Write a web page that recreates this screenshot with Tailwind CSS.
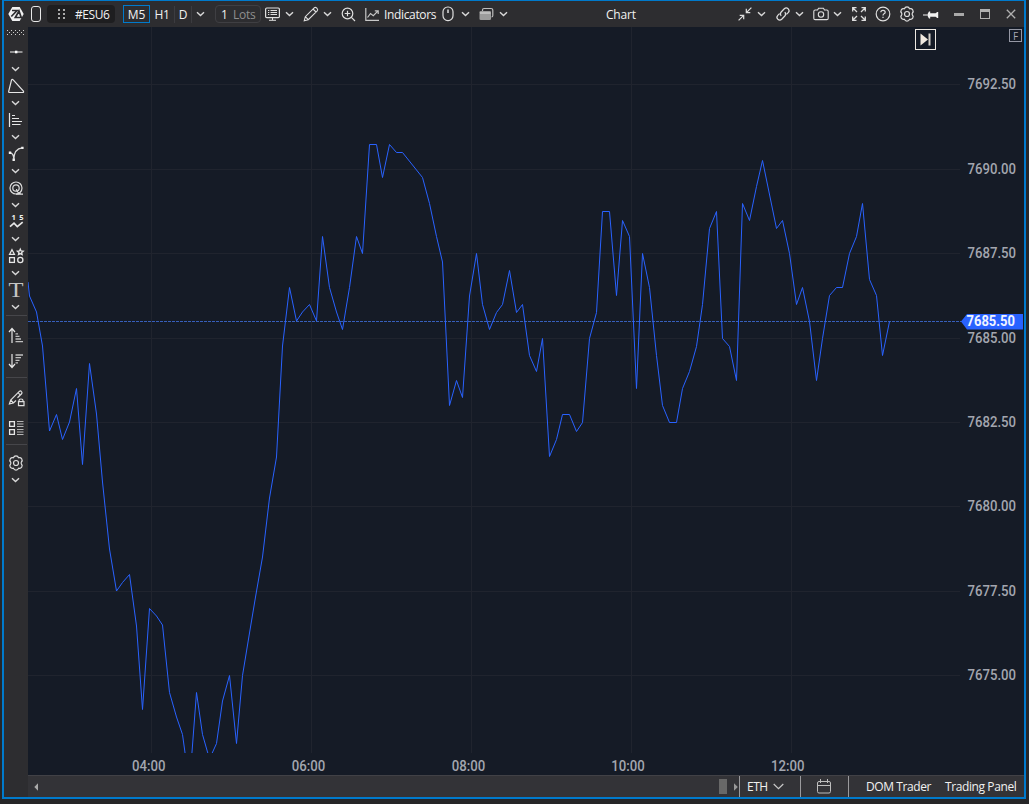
<!DOCTYPE html>
<html lang="en">
<head>
    <meta charset="UTF-8">
    <meta name="viewport" content="width=device-width, initial-scale=1.0">
    <title>Chart</title>
    <script src="https://cdn.jsdelivr.net/npm/@tailwindcss/browser@4"></script>
</head>
<body class="bg-[#262627] overflow-hidden">
    <!-- Shared icon shapes -->
    <svg class="hidden">
        <symbol id="chev" viewBox="0 0 10 6"><path d="M1 1.2 L4.5 4.6 L8 1.2" fill="none" stroke="#d8d8d8" stroke-width="1.4"/></symbol>
        <symbol id="gear" viewBox="0 0 16 16">
            <path d="M5.4 2.8 Q6 .8 8 .8 Q10 .8 10.6 2.8 Q12.6 2.2 13.7 3.8 Q14.8 5.6 13.4 7 Q12.8 8 13.4 9 Q14.8 10.4 13.7 12.2 Q12.6 13.8 10.6 13.2 Q10 15.2 8 15.2 Q6 15.2 5.4 13.2 Q3.4 13.8 2.3 12.2 Q1.2 10.4 2.6 9 Q3.2 8 2.6 7 Q1.2 5.6 2.3 3.8 Q3.4 2.2 5.4 2.8Z" fill="none" stroke="#dedede" stroke-width="1.2"/>
            <circle cx="8" cy="8" r="2.5" fill="none" stroke="#dedede" stroke-width="1.2"/>
        </symbol>
    </svg>

    <div class="w-[1024px] h-[799px] ml-[2px] border-2 border-t-1 border-[#007acc] flex flex-col font-['Open_Sans','Noto_Sans',sans-serif] text-xs text-[#f1f1f1]">
        <!-- Title bar -->
        <header class="h-[26px] shrink-0 bg-[#2d2d30] flex items-center whitespace-nowrap">
            <svg class="ml-1 shrink-0" width="16" height="16" viewBox="0 0 16 16">
                <path d="M4.3 1 H11.7 L15.7 8 L11.7 15 H4.3 L.3 8Z" fill="#f1f1f1"/>
                <path d="M4 4.5 H9 L3.3 10.5 M7.3 11.5 L11 5 L13.2 11.5Z" fill="none" stroke="#2d2d30" stroke-width="1.7"/>
            </svg>
            <svg class="ml-[6px] shrink-0" width="12" height="18" viewBox="0 0 12 18"><rect x="1.5" y="1.5" width="9" height="15" rx="2.5" fill="none" stroke="#e8e8e8"/></svg>
            <div class="ml-[5px] w-[68px] h-[18px] shrink-0 rounded bg-[#1e1e20] flex items-center pl-[10px]">
                <svg class="shrink-0" width="8" height="12" viewBox="0 0 8 12" fill="#aaa">
                    <path d="M1 1h2v2H1zM6 1h2v2H6zM1 5h2v2H1zM6 5h2v2H6zM1 9h2v2H1zM6 9h2v2H6z"/>
                </svg>
                <span class="ml-[10px] pt-0.5 tracking-[-0.45px]">#ESU6</span>
            </div>
            <div class="ml-2 w-[27px] h-[18px] shrink-0 border border-[#007acc] flex items-center justify-center"><span class="pt-0.5">M5</span></div>
            <span class="w-[24px] shrink-0 pt-0.5 text-center tracking-[-0.3px]">H1</span>
            <div class="w-px h-[17px] bg-[#3c3c40]"></div>
            <span class="w-[16px] shrink-0 pt-0.5 text-center">D</span>
            <div class="w-px h-[17px] bg-[#3c3c40]"></div>
            <svg class="ml-[4px] shrink-0" width="10" height="6"><use href="#chev"/></svg>
            <div class="ml-[9px] w-[46px] h-[18px] shrink-0 rounded border border-[#3f3f43] flex items-center pl-[5px] pt-0.5">
                <span>1</span><span class="ml-[5px] text-[#8f8f8f] tracking-[-0.2px]">Lots</span>
            </div>
            <svg class="ml-1 shrink-0" width="15" height="16" viewBox="0 0 15 16" fill="none" stroke="#dedede">
                <rect x=".6" y="2" width="13.8" height="9.6" rx="1.2" stroke-width="1.2"/>
                <path d="M3 4.5h1.3M5.5 4.5H12M3 6.5h1.3M5.5 6.5H12M3 8.5h1.3M5.5 8.5H12M7.5 11.5v2.5M4 14.3h7"/>
            </svg>
            <svg class="ml-[5px] shrink-0" width="10" height="6"><use href="#chev"/></svg>
            <svg class="ml-2 shrink-0" width="16" height="16" viewBox="0 0 16 16" fill="none" stroke="#dedede" stroke-width="1.1">
                <path d="M1.2 14.8 L2.3 10.7 L11.2 1.8 Q12.3.8 13.5 1.9 L14.1 2.5 Q15.2 3.7 14.2 4.8 L5.3 13.7Z M2.3 10.7 L5.3 13.7 M10 3 L13 6"/>
            </svg>
            <svg class="ml-1 shrink-0" width="10" height="6"><use href="#chev"/></svg>
            <svg class="ml-2 shrink-0" width="15" height="15" viewBox="0 0 15 15" fill="none" stroke="#dedede" stroke-width="1.2">
                <circle cx="6.5" cy="6.5" r="5.3"/><path d="M10.4 10.4 L14 14M3.7 6.5h5.6M6.5 3.7v5.6"/>
            </svg>
            <svg class="ml-[9px] shrink-0" width="15" height="15" viewBox="0 0 15 15" fill="none" stroke="#c8c8c8" stroke-width="1.2">
                <path d="M.8 1V13.3H14M2.5 10.5 L5.5 6.5 L8.3 8.7 L12.8 4.2M9.8 3.8H13.2V7"/>
            </svg>
            <span class="ml-1 w-[53px] shrink-0 pt-0.5 tracking-[-0.35px]">Indicators</span>
            <svg class="ml-[5px] shrink-0" width="12" height="16" viewBox="0 0 12 16" fill="none" stroke="#dedede" stroke-width="1.2">
                <rect x="1" y="1" width="10" height="13.6" rx="4.8"/><path d="M6 3.5v3.5" stroke-width="1.5"/>
            </svg>
            <svg class="ml-[7px] shrink-0" width="10" height="6"><use href="#chev"/></svg>
            <svg class="ml-2 shrink-0" width="15" height="14" viewBox="0 0 15 14">
                <path d="M3.5 4 V3 Q3.5 1.5 5 1.5 H12 Q13.8 1.5 13.8 3 V8.5 Q13.8 10 12.5 10" fill="none" stroke="#bdbdbd" stroke-width="1.2"/>
                <rect x=".5" y="4" width="11.5" height="9" rx="1.3" fill="#9c9c9c"/><path d="M1 6h10.5" stroke="#e0e0e0"/>
            </svg>
            <svg class="ml-[5px] shrink-0" width="10" height="6"><use href="#chev"/></svg>
            <span class="ml-[97px] w-[31px] shrink-0 pt-0.5 tracking-[-0.2px]">Chart</span>
            <svg class="ml-[101px] shrink-0" width="14" height="14" viewBox="0 0 14 14" fill="none" stroke="#dedede" stroke-width="1.2">
                <path d="M.6 13.4 L5.4 8.6M1.7 8.3H5.7V12.3M13.4.6 L8.6 5.4M8.3 1.7V5.7H12.3"/>
            </svg>
            <svg class="ml-[5px] shrink-0" width="10" height="6"><use href="#chev"/></svg>
            <svg class="ml-2 shrink-0" width="16" height="16" viewBox="0 0 16 16" fill="none" stroke="#dedede" stroke-width="1.2">
                <path d="M6.2 9.8 Q4.5 8 6.2 6 L9.3 2.8 Q11.2 1 13.2 2.8 Q15.1 4.8 13.2 6.7 L11.5 8.4M9.8 6.2 Q11.5 8 9.8 10 L6.7 13.2 Q4.8 15 2.8 13.2 Q.9 11.2 2.8 9.3 L4.5 7.6"/>
            </svg>
            <svg class="ml-[4px] shrink-0" width="10" height="6"><use href="#chev"/></svg>
            <svg class="ml-2 shrink-0" width="16" height="14" viewBox="0 0 16 14" fill="none" stroke="#dedede" stroke-width="1.1">
                <path d="M2.2 3 H4.5 L5.6 1.2 H10.4 L11.5 3 H13.8 Q15.2 3 15.2 4.4 V11.2 Q15.2 12.6 13.8 12.6 H2.2 Q.8 12.6 .8 11.2 V4.4 Q.8 3 2.2 3Z"/><circle cx="8" cy="7.5" r="2.7"/>
            </svg>
            <svg class="ml-[4px] shrink-0" width="10" height="6"><use href="#chev"/></svg>
            <svg class="ml-[9px] shrink-0" width="14" height="14" viewBox="0 0 14 14" fill="none" stroke="#dedede" stroke-width="1.3">
                <path d="M.7 4.5V.7H4.5M.7.7 L5 5M9.5.7H13.3V4.5M13.3.7 L9 5M.7 9.5V13.3H4.5M.7 13.3 L5 9M9.5 13.3H13.3V9.5M13.3 13.3 L9 9"/>
            </svg>
            <svg class="ml-[9px] shrink-0" width="16" height="16" viewBox="0 0 16 16" fill="none" stroke="#dedede" stroke-width="1.2">
                <circle cx="8" cy="8" r="6.8"/><path d="M5.8 6.3 Q5.9 4.3 8 4.3 Q10.2 4.3 10.2 6.2 Q10.2 7.2 9 7.8 Q8 8.3 8 9.5M8 10.7v1.3"/>
            </svg>
            <svg class="ml-2 shrink-0" width="16" height="16"><use href="#gear"/></svg>
            <svg class="ml-2 mt-px shrink-0" width="16" height="10" viewBox="0 0 16 10" fill="#f1f1f1">
                <path d="M0 4.5H6V5.5H0zM6 1.5H7.2V3.2H12.6L14.2 2H15.2V8H14.2L12.6 6.8H7.2V8.5H6L4.8 6.5V3.5Z"/>
            </svg>
            <div class="ml-[15px] w-[10px] h-[3px] mt-px shrink-0 bg-[#a9a9a9]"></div>
            <div class="ml-4 w-[10px] h-[10px] shrink-0 border border-t-3 border-[#b0b0b0]"></div>
            <svg class="ml-4 shrink-0" width="10" height="10" viewBox="0 0 10 10"><path d="M.8.8 L9.2 9.2M9.2.8 L.8 9.2" stroke="#b0b0b0" stroke-width="1.3"/></svg>
        </header>

        <div class="flex grow min-h-0">
            <!-- Drawing tools -->
            <aside class="w-[24px] shrink-0 bg-[#2d2d30] flex flex-col items-center">
                <svg class="shrink-0" width="24" height="14" viewBox="0 0 24 14">
                    <path d="M3 3.5H20M3 7.5H20" stroke="#d0d0d0" stroke-dasharray="1 3"/><path d="M5 5.5H20" stroke="#d0d0d0" stroke-dasharray="1 3"/>
                </svg>
                <svg class="shrink-0" width="24" height="22" viewBox="0 0 24 22"><path d="M6 11H18.5" stroke="#b5b5b5" stroke-width="1.5"/><rect x="11" y="9.7" width="2.4" height="2.6" fill="#fff"/></svg>
                <svg class="my-[3px] shrink-0" width="10" height="6"><use href="#chev"/></svg>
                <svg class="shrink-0" width="24" height="22" viewBox="0 0 24 22"><path d="M7.5 5 Q8.2 3.9 9.2 4.9 L19.4 16 Q20 17.5 18.7 17.5 H5.5 Q4.5 17.5 4.7 16.3Z" fill="none" stroke="#e6e6e6" stroke-width="1.2"/></svg>
                <svg class="my-[3px] shrink-0" width="10" height="6"><use href="#chev"/></svg>
                <svg class="shrink-0" width="24" height="22" viewBox="0 0 24 22"><path d="M5.5 4V18M8 6.5h3M8 9.5h7M8 12.5h10M8 15.5h8.5" stroke="#e6e6e6" stroke-width="1.2"/></svg>
                <svg class="my-[3px] shrink-0" width="10" height="6"><use href="#chev"/></svg>
                <svg class="shrink-0" width="24" height="22" viewBox="0 0 24 22">
                    <path d="M18.3 4.9 Q10 5.5 9.7 17M6 9.7 Q9.4 10.5 9.7 15" fill="none" stroke="#dedede" stroke-width="1.3"/>
                    <path d="M17.2 3.7h2.4v2.4h-2.4zM4.8 8.5h2.4v2.4h-2.4zM8.5 15.6h2.4v2.4h-2.4z" fill="#f1f1f1"/>
                </svg>
                <svg class="my-[3px] shrink-0" width="10" height="6"><use href="#chev"/></svg>
                <svg class="shrink-0" width="24" height="22" viewBox="0 0 24 22" fill="none" stroke="#dedede" stroke-width="1.2">
                    <circle cx="12" cy="11" r="6"/><circle cx="12" cy="11" r="3.2"/><path d="M12 17.2H19M12.5 12 Q13 16 17 17"/>
                </svg>
                <svg class="my-[3px] shrink-0" width="10" height="6"><use href="#chev"/></svg>
                <svg class="shrink-0" width="24" height="22" viewBox="0 0 24 22">
                    <path d="M6 15.7 L10 12.2 L13.3 15.7 L18.7 11.2" fill="none" stroke="#e6e6e6" stroke-width="1.7"/>
                    <text x="7.5" y="9" font-size="7.5" font-weight="700" fill="#f1f1f1">1</text><text x="15.3" y="9" font-size="7.5" font-weight="700" fill="#f1f1f1">5</text>
                </svg>
                <svg class="my-[3px] shrink-0" width="10" height="6"><use href="#chev"/></svg>
                <svg class="shrink-0" width="24" height="22" viewBox="0 0 24 22" fill="none" stroke="#e6e6e6" stroke-width="1.3">
                    <path d="M8 4.7 L10.4 9.3 H5.6ZM16.3 4.2 L17.1 6 L19.2 6.2 L17.7 7.6 L18.1 9.6 L16.3 8.6 L14.5 9.6 L14.9 7.6 L13.4 6.2 L15.5 6Z"/><rect x="5.6" y="12.6" width="4.8" height="4.8"/><circle cx="16.3" cy="15" r="2.6"/>
                </svg>
                <svg class="my-[3px] shrink-0" width="10" height="6"><use href="#chev"/></svg>
                <svg class="shrink-0" width="24" height="22" viewBox="0 0 24 22"><text x="4.6" y="18" font-size="21" fill="#c4c4c4" textLength="15" lengthAdjust="spacingAndGlyphs" class="font-['Liberation_Serif',serif]">T</text></svg>
                <svg class="my-[3px] shrink-0" width="10" height="6"><use href="#chev"/></svg>
                <div class="mt-[2px] w-[21px] h-px shrink-0 bg-[#46464a]"></div>
                <svg class="mt-[10px] shrink-0" width="24" height="18" viewBox="0 0 24 18">
                    <path d="M8 17V2.5M5 6 L8 2.5 L11 6" fill="none" stroke="#e6e6e6" stroke-width="1.2"/><path d="M11.5 7.8h2.5M11.5 10.4h4M11.5 13h5.5M11.5 15.6h7.5" stroke="#c0c0c0" stroke-width="1.3"/>
                </svg>
                <svg class="mt-2 shrink-0" width="24" height="18" viewBox="0 0 24 18">
                    <path d="M8 2V15.5M5 12 L8 15.5 L11 12" fill="none" stroke="#e6e6e6" stroke-width="1.2"/><path d="M11.5 3h7.5M11.5 5.7h5.5M11.5 8.3h4M11.5 10.9h2.5" stroke="#c0c0c0" stroke-width="1.3"/>
                </svg>
                <div class="mt-[7px] w-[21px] h-px shrink-0 bg-[#46464a]"></div>
                <svg class="mt-[11px] shrink-0" width="24" height="18" viewBox="0 0 24 18" fill="none" stroke="#dedede" stroke-width="1.2">
                    <path d="M13.5 8.8 L17.6 4.8 Q18.5 3.6 17.5 2.6 Q16.5 1.5 15.3 2.4 L6.7 11 L5.4 15 L9.4 14 L12 11.5M14 3.7 L16.4 6.1M6.7 11 L9.4 14"/><path d="M15 12.5V11.5Q15 10 17 10T19 11.5V12.5M14.5 12.6H20V16.6H14.5Z"/>
                </svg>
                <svg class="mt-[12px] shrink-0" width="24" height="18" viewBox="0 0 24 18">
                    <path d="M5.6 2.6h4.8v4.8H5.6zM5.6 10.6h4.8v4.8H5.6z" fill="none" stroke="#e6e6e6" stroke-width="1.3"/><path d="M13 2.5h6.5M13 5h6.5M13 7.5h6.5M13 10.5h6.5M13 13h6.5M13 15.5h6.5" stroke="#b5b5b5" stroke-width="1.1"/>
                </svg>
                <div class="mt-[7px] w-[21px] h-px shrink-0 bg-[#46464a]"></div>
                <svg class="mt-[10px] shrink-0" width="16" height="16"><use href="#gear"/></svg>
                <svg class="mt-[6px] shrink-0" width="10" height="6"><use href="#chev"/></svg>
            </aside>

            <main class="grow min-w-0 flex flex-col">
                <!-- Price chart -->
                <div class="relative h-[748px] shrink-0 bg-[#151b26]">
                    <svg width="996" height="748" viewBox="28 27 996 748" class="block font-['Roboto',sans-serif]">
                        <defs><clipPath id="plot"><rect x="28" y="27" width="932" height="726"/></clipPath></defs>
                        <path d="M151 27V753M311 27V753M471 27V753M631 27V753M791 27V753" transform="translate(.5 0)" stroke="#20242e"/>
                        <path d="M28 84H960M28 169H960M28 253H960M28 338H960M28 422H960M28 506H960M28 591H960M28 675H960" transform="translate(0 .5)" stroke="#20242e"/>
                        <path d="M28 321.5H962" stroke="#4070e0" stroke-dasharray="3 1" stroke-opacity=".8"/>
                        <polyline clip-path="url(#plot)" fill="none" stroke="#2962ff" points="
                            28,282 29.5,296 36.5,312 42.5,346 49.5,431 56.5,414.5 62.5,439.5 69.5,422 76.5,388.5 82.5,464.5 89.5,363.5 96.5,414
                            102.5,482 109.5,549 116.5,591 122.5,582.5 129.5,574.5 136.5,626 142.5,709.5 149.5,608.5 156.5,616 162.5,625 169.5,692.5
                            176.5,717 182.5,734.5 189.5,785 196.5,692.5 202.5,734.5 209.5,759 216.5,743.5 222.5,701 229.5,675.5 236.5,743.5 242.5,675.5
                            249.5,633 255.5,597 262.5,557 269.5,498 276.5,457 282.5,346 289.5,287.5 296.5,321 302.5,312 309.5,304.5 316.5,321
                            322.5,236.5 329.5,287.5 336.5,312 342.5,329.5 349.5,287.5 356.5,236.5 362.5,253.5 369.5,144.5 376.5,144.5 382.5,177.5
                            389.5,144.5 396.5,152.5 402.5,152.5 422.5,177.5 429.5,203.5 436.5,236.5 442.5,262 449.5,405.5 456.5,380.5 462.5,397.5
                            469.5,296 476.5,253.5 482.5,304.5 489.5,329.5 496.5,312.5 502.5,304.5 509.5,270.5 516.5,312.5 522.5,304.5 529.5,355.5
                            536.5,371.5 542.5,338.5 549.5,456.5 556.5,439.5 562.5,414.5 569.5,414.5 576.5,431.5 582.5,422.5 589.5,338.5 596.5,312.5
                            602.5,211.5 609.5,211.5 616.5,295.5 622.5,220.5 629.5,236.5 636.5,388.5 642.5,253.5 649.5,287.5 656.5,355.5 662.5,405.5
                            669.5,422.5 676.5,422.5 682.5,388.5 689.5,371.5 696.5,346.5 702.5,304.5 709.5,228.5 716.5,211.5 722.5,338.5 729.5,346.5
                            736.5,380.5 742.5,203.5 749.5,220.5 756.5,186.5 762.5,160.5 776.5,228.5 782.5,220.5 789.5,253.5 796.5,304.5 802.5,287.5
                            809.5,321.5 816.5,380.5 822.5,338.5 829.5,295.5 836.5,287.5 842.5,287.5 849.5,253.5 856.5,236.5 862.5,203.5 869.5,279.5
                            876.5,295.5 882.5,355.5 889.5,321.5"/>
                        <g fill="#a3a6af" font-size="14" font-weight="500">
                            <text x="967.5" y="89" textLength="48.5" lengthAdjust="spacingAndGlyphs">7692.50</text>
                            <text x="967.5" y="174" textLength="48.5" lengthAdjust="spacingAndGlyphs">7690.00</text>
                            <text x="967.5" y="258" textLength="48.5" lengthAdjust="spacingAndGlyphs">7687.50</text>
                            <text x="967.5" y="343" textLength="48.5" lengthAdjust="spacingAndGlyphs">7685.00</text>
                            <text x="967.5" y="427" textLength="48.5" lengthAdjust="spacingAndGlyphs">7682.50</text>
                            <text x="967.5" y="511" textLength="48.5" lengthAdjust="spacingAndGlyphs">7680.00</text>
                            <text x="967.5" y="596" textLength="48.5" lengthAdjust="spacingAndGlyphs">7677.50</text>
                            <text x="967.5" y="680" textLength="48.5" lengthAdjust="spacingAndGlyphs">7675.00</text>
                            <text x="132" y="771" textLength="33.5" lengthAdjust="spacingAndGlyphs">04:00</text>
                            <text x="291.7" y="771" textLength="33.5" lengthAdjust="spacingAndGlyphs">06:00</text>
                            <text x="451.7" y="771" textLength="33.5" lengthAdjust="spacingAndGlyphs">08:00</text>
                            <text x="611.3" y="771" textLength="33.5" lengthAdjust="spacingAndGlyphs">10:00</text>
                            <text x="771" y="771" textLength="33.5" lengthAdjust="spacingAndGlyphs">12:00</text>
                        </g>
                        <path d="M961 321.5 L967 314H1023V329.5H967Z" fill="#2962ff"/>
                        <text x="966.5" y="326" font-size="14" font-weight="700" fill="#f0f3ff" textLength="48.5" lengthAdjust="spacingAndGlyphs">7685.50</text>
                    </svg>
                    <!-- Overlay buttons -->
                    <div class="absolute left-[887px] top-[2px] w-[21px] h-[21px] border border-[#ece8e1] flex items-center justify-center">
                        <svg width="13" height="13" viewBox="0 0 13 13"><path d="M1.5.5 L9 6.5 L1.5 12.5Z" fill="#f0e9df"/><path d="M10.5.5V12.5" stroke="#d5d0c8" stroke-width="2"/></svg>
                    </div>
                    <div class="absolute left-[981px] top-[2px] w-[13px] h-[13px] border border-[#9598a5] flex items-center justify-center text-[10px] leading-none text-[#a5a8b5]">F</div>
                </div>

                <!-- Scrollbar and status bar -->
                <div class="grow bg-[#333337] border-t border-[#414146] flex items-center whitespace-nowrap">
                    <svg class="ml-[6px] shrink-0" width="5" height="8" viewBox="0 0 5 8"><path d="M4 .3V7.7L.3 4Z" fill="#aaa"/></svg>
                    <div class="ml-[680px] w-[8px] h-[15px] shrink-0 bg-[#686868]"></div>
                    <svg class="ml-[7px] shrink-0" width="5" height="8" viewBox="0 0 5 8"><path d="M0 .3V7.7L3.8 4Z" fill="#999"/></svg>
                    <div class="w-px self-stretch bg-[#9a9a9d]"></div>
                    <span class="ml-[7px] w-[22px] shrink-0 tracking-[-0.5px]">ETH</span>
                    <svg class="ml-[4px] shrink-0" width="11" height="7" viewBox="0 0 11 7"><path d="M.7 1 L5.5 5.6 L10.3 1" fill="none" stroke="#c8c8c8" stroke-width="1.2"/></svg>
                    <div class="ml-[16px] w-px self-stretch bg-[#9a9a9d]"></div>
                    <svg class="ml-4 shrink-0" width="14" height="15" viewBox="0 0 14 15" fill="none" stroke="#bdbdbd"><rect x=".5" y="2.5" width="13" height="11.5" rx="1.5"/><path d="M.5 6.5h13M3.5 0v4M10.5 0v4"/></svg>
                    <div class="ml-[17px] w-px self-stretch bg-[#9a9a9d]"></div>
                    <span class="ml-[17px] w-[65px] shrink-0 tracking-[-0.4px]">DOM Trader</span>
                    <span class="ml-[14px] tracking-[-0.4px]">Trading Panel</span>
                </div>
            </main>
        </div>
    </div>
</body>
</html>
